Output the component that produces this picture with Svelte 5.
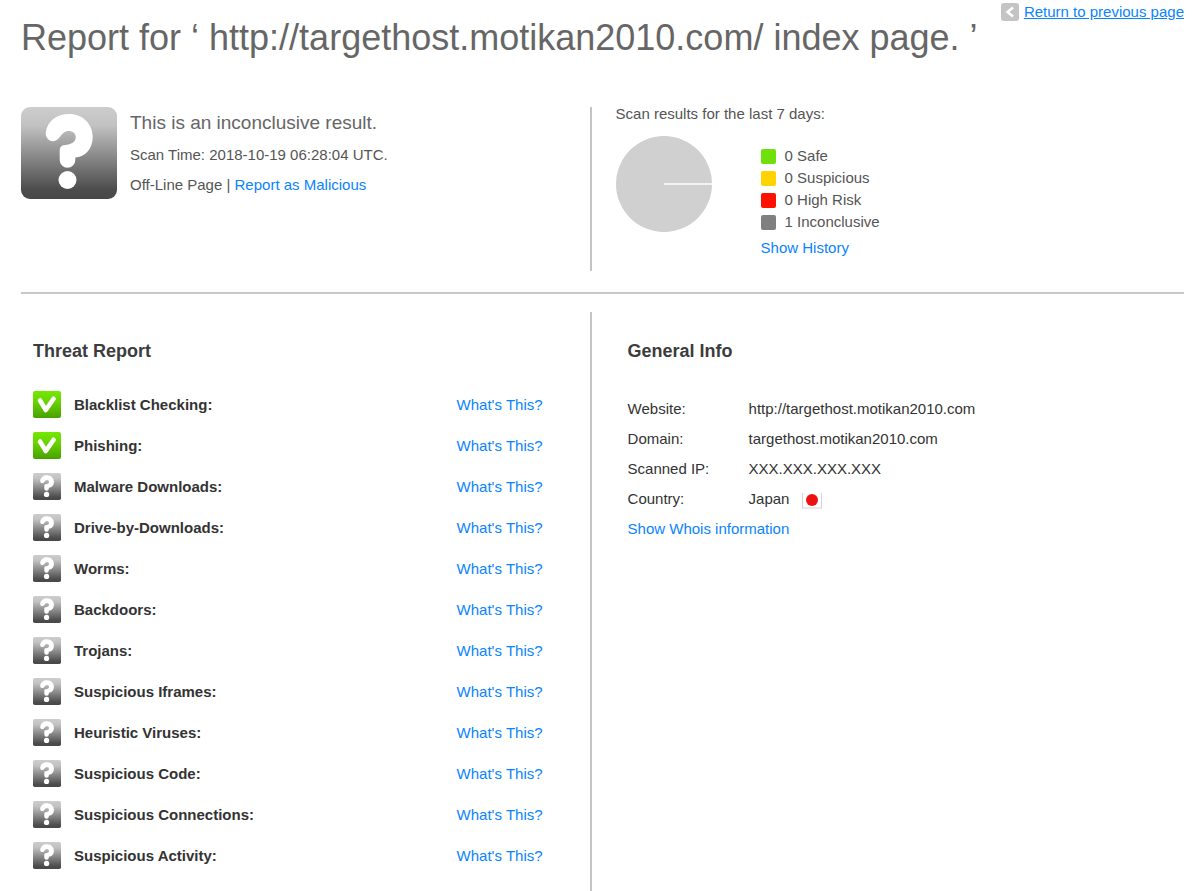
<script>
  let host = "targethost.motikan2010.com";
  let scanTime = "2018-10-19 06:28:04 UTC";

  let history = [
    { label: "Safe", count: 0, color: "#6fe00a" },
    { label: "Suspicious", count: 0, color: "#ffd200" },
    { label: "High Risk", count: 0, color: "#ff1100" },
    { label: "Inconclusive", count: 1, color: "#808080" },
  ];

  let threats = [
    { name: "Blacklist Checking", safe: true },
    { name: "Phishing", safe: true },
    { name: "Malware Downloads", safe: false },
    { name: "Drive-by-Downloads", safe: false },
    { name: "Worms", safe: false },
    { name: "Backdoors", safe: false },
    { name: "Trojans", safe: false },
    { name: "Suspicious Iframes", safe: false },
    { name: "Heuristic Viruses", safe: false },
    { name: "Suspicious Code", safe: false },
    { name: "Suspicious Connections", safe: false },
    { name: "Suspicious Activity", safe: false },
  ];

  let info = [
    { label: "Website", value: `http://${host}` },
    { label: "Domain", value: host },
    { label: "Scanned IP", value: "XXX.XXX.XXX.XXX" },
    { label: "Country", value: "Japan", flag: true },
  ];
</script>

{#snippet questionIcon(id, radius)}
  <svg viewBox="0 0 96 92" role="img" aria-label="Inconclusive">
    <defs>
      <linearGradient id={id} x1="0" y1="0" x2="0" y2="1">
        <stop offset="0" stop-color="#cdcdcd" />
        <stop offset="0.2" stop-color="#c2c2c2" />
        <stop offset="0.9" stop-color="#4c4c4c" />
        <stop offset="1" stop-color="#484848" />
      </linearGradient>
    </defs>
    <rect width="96" height="92" rx={radius} fill="url(#{id})" />
    <path
      d="M24.7 26 C26 14 36 7 48 7 C62 7 71.700 17 71.700 30 C71.700 42 64 50 54.300 50.500 V53 A7.800 7.800 0 0 1 38.700 53 V43 C39 39.500 41 38.200 44 38 C50 37.500 54.700 35 54.700 30.500 C54.700 26.500 52 24 47.500 24 C44 24 41.500 26.500 38 31 C32 37.500 24.500 33 24.700 26 Z"
      fill="#fff"
    />
    <circle cx="46.500" cy="73" r="9" fill="#fff" />
  </svg>
{/snippet}

{#snippet checkIcon(id)}
  <svg viewBox="0 0 28 27" role="img" aria-label="Safe">
    <defs>
      <linearGradient id={id} x1="0" y1="0" x2="0" y2="1">
        <stop offset="0" stop-color="#74e800" />
        <stop offset="0.4" stop-color="#68d400" />
        <stop offset="1" stop-color="#48a000" />
      </linearGradient>
    </defs>
    <rect width="28" height="27" rx="2" fill="url(#{id})" />
    <path
      d="M7 9.500 L12.800 19 L20.600 7.800"
      fill="none"
      stroke="#fff"
      stroke-width="4.600"
      stroke-linecap="round"
      stroke-linejoin="round"
    />
  </svg>
{/snippet}

<main>
  <header>
    <h1>Report for ‘ http://{host}/ index page. ’</h1>
    <a class="back" href="#back">
      <svg viewBox="0 0 18 18" aria-hidden="true">
        <rect width="18" height="18" rx="3" fill="#c4c4c4" />
        <path d="M12 4.500 L6.500 9 L12 13.500" fill="none" stroke="#fff" stroke-width="2.500" />
      </svg>
      <span>Return to previous page</span>
    </a>
  </header>

  <section class="summary">
    <div class="verdict">
      <div class="verdict-icon">{@render questionIcon("verdict", 9)}</div>
      <div>
        <h2>This is an inconclusive result.</h2>
        <p>Scan Time: {scanTime}.</p>
        <p>Off-Line Page | <a href="#report">Report as Malicious</a></p>
      </div>
    </div>

    <div class="history">
      <p>Scan results for the last 7 days:</p>
      <div class="chart">
        <svg class="pie" viewBox="0 0 96 96" role="img" aria-label="Scan results">
          <circle cx="48" cy="48" r="48" fill="#d0d0d0" />
          <path d="M48 48 H96" stroke="#fff" stroke-width="1.300" />
        </svg>
        <div>
          <ul class="legend">
            {#each history as item}
              <li>
                <span class="swatch" style="background: {item.color}"></span>
                {item.count} {item.label}
              </li>
            {/each}
          </ul>
          <a href="#history">Show History</a>
        </div>
      </div>
    </div>
  </section>

  <div class="details">
    <section class="threats">
      <h3>Threat Report</h3>
      <ul>
        {#each threats as threat, i}
          <li>
            <span class="status">
              {#if threat.safe}
                {@render checkIcon(`threat-${i}`)}
              {:else}
                {@render questionIcon(`threat-${i}`, 6)}
              {/if}
            </span>
            <strong>{threat.name}:</strong>
            <a href="#threat-{i}">What's This?</a>
          </li>
        {/each}
      </ul>
    </section>

    <section class="info">
      <h3>General Info</h3>
      <table>
        <tbody>
          {#each info as row}
            <tr>
              <th scope="row">{row.label}:</th>
              <td>
                {row.value}
                {#if row.flag}
                  <svg class="flag" viewBox="0 0 20 18" role="img" aria-label="Flag of Japan">
                    <path d="M0.500 2 V17 H19.500 V2" fill="#fff" stroke="#d4d4d4" stroke-width="1.200" />
                    <circle cx="10" cy="9" r="6" fill="#ee1111" />
                  </svg>
                {/if}
              </td>
            </tr>
          {/each}
        </tbody>
      </table>
      <a href="#whois">Show Whois information</a>
    </section>
  </div>
</main>

<style>
  :global(body) {
    margin: 0;
    background: #fff;
  }

  main {
    box-sizing: border-box;
    display: flex;
    flex-direction: column;
    min-height: 100vh;
    padding: 0 16px 0 21px;
    font-family: "Liberation Sans", Arial, sans-serif;
    font-size: 15px;
    line-height: 20px;
    color: #555;
  }

  h1,
  h2,
  h3,
  p,
  ul {
    margin: 0;
    padding: 0;
    font-weight: normal;
  }

  ul {
    list-style: none;
  }

  svg {
    display: block;
    width: 100%;
    height: 100%;
  }

  a {
    color: #0a84ff;
    text-decoration: none;
  }

  header {
    display: flex;
    justify-content: space-between;
    align-items: flex-start;
  }

  h1 {
    padding-top: 16px;
    font-size: 36px;
    line-height: 44px;
    color: #666;
  }

  .back {
    display: flex;
    align-items: center;
    gap: 5px;
    padding-top: 2px;
    white-space: nowrap;
  }

  .back svg {
    width: 18px;
    height: 18px;
  }

  .back span {
    text-decoration: underline;
  }

  .summary,
  .details {
    display: grid;
    grid-template-columns: 44fr 46fr;
  }

  .summary {
    margin-top: 47px;
    padding-bottom: 21px;
    border-bottom: 2px solid #c8c8c8;
  }

  .verdict {
    display: flex;
    align-items: flex-start;
    gap: 13px;
  }

  .verdict-icon {
    flex: none;
    width: 96px;
    height: 92px;
  }

  h2 {
    padding-top: 4px;
    font-size: 19px;
    line-height: 24px;
    color: #666;
  }

  .verdict p {
    margin-top: 10px;
  }

  .history {
    min-height: 164px;
    padding-left: 24px;
    border-left: 2px solid #c4c4c4;
    box-sizing: border-box;
  }

  .history p {
    margin-top: -3px;
  }

  .chart {
    display: flex;
    gap: 49px;
    margin-top: 12px;
  }

  .pie {
    width: 96px;
    height: 96px;
  }

  .legend {
    padding: 9px 0 5px;
  }

  .legend li {
    display: flex;
    align-items: center;
    gap: 9px;
    line-height: 22px;
  }

  .swatch {
    width: 15px;
    height: 15px;
    border-radius: 2px;
  }

  .details {
    flex: 1;
    padding-top: 18px;
    color: #333;
  }

  h3 {
    padding-top: 27px;
    font-size: 18px;
    font-weight: bold;
    line-height: 24px;
    color: #3c3c3c;
  }

  .threats {
    padding: 0 47px 0 12px;
  }

  .threats ul {
    padding-top: 21px;
  }

  .threats li {
    display: flex;
    align-items: center;
    height: 41px;
  }

  .status {
    width: 28px;
    height: 27px;
    margin-right: 13px;
  }

  .threats a {
    margin-left: auto;
  }

  .info {
    padding-left: 36px;
    border-left: 2px solid #c4c4c4;
  }

  table {
    margin-top: 31px;
    border-collapse: collapse;
  }

  th,
  td {
    height: 30px;
    padding: 0;
    font-weight: normal;
    text-align: left;
  }

  th {
    width: 121px;
  }

  .flag {
    display: inline-block;
    width: 20px;
    height: 18px;
    margin-left: 8px;
    vertical-align: middle;
  }

  .info > a {
    display: inline-block;
    padding-top: 5px;
  }
</style>
